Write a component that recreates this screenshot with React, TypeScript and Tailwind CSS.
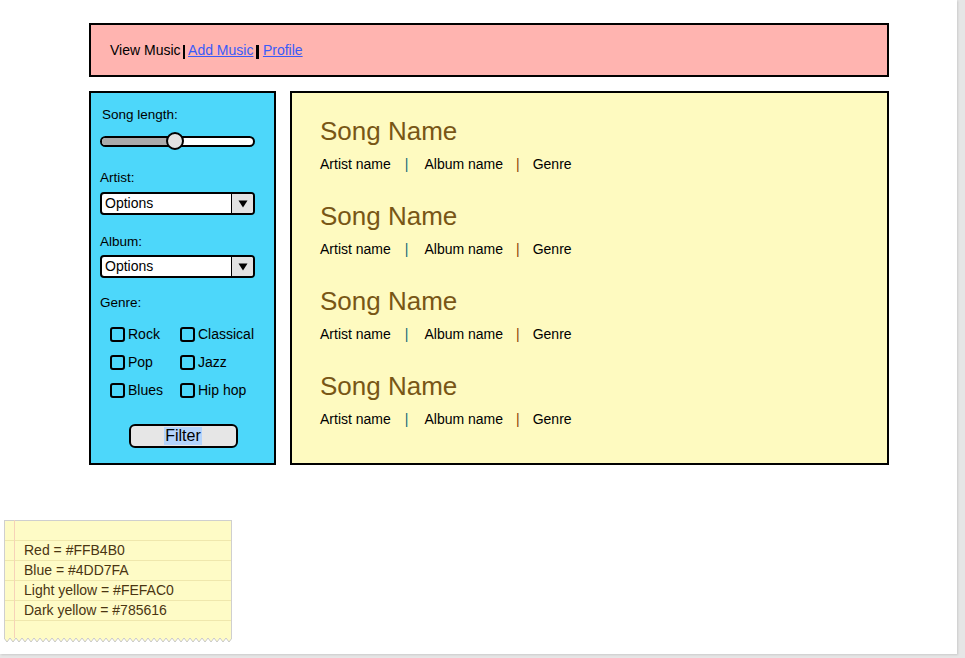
import React from "react";

const songs = [1, 2, 3, 4];

const Select = () => (
  <div className="flex h-[23px] w-[155px] overflow-hidden rounded-[4px] border-2 border-black bg-white">
    <span className="flex-1 pl-[3px] text-[14px] leading-[19px]">Options</span>
    <span className="flex w-[22px] items-center justify-center border-l-[1.5px] border-black bg-[#e2e2e2]">
      <svg width="10" height="8" viewBox="0 0 10 8">
        <polygon points="0.5,0.5 9.5,0.5 5,7.5" fill="#000" />
      </svg>
    </span>
  </div>
);

const Check = ({ label }: { label: string }) => (
  <div className="flex h-[28px] items-center">
    <span className="mr-[3px] h-[15px] w-[15px] rounded-[3px] border-2 border-black bg-transparent" />
    <span className="text-[14px]">{label}</span>
  </div>
);

const Zigzag = () => {
  const pts: string[] = [];
  for (let x = 0; x <= 228; x += 6) {
    pts.push(`${x},0`);
    pts.push(`${x + 3},4`);
  }
  return (
    <svg width="228" height="5" viewBox="0 0 228 5" className="block">
      <polygon points={`0,0 ${pts.join(" ")} 228,0`} fill="#fefbc6" />
      <polyline points={pts.join(" ")} fill="none" stroke="#c8c8c8" strokeWidth="1" />
    </svg>
  );
};

const App = () => {
  return (
    <div
      className="h-[658px] w-[965px] overflow-hidden bg-[#e6e6e6] text-black"
      style={{ fontFamily: '"Liberation Sans", Arial, sans-serif' }}
    >
      <div className="h-[654px] w-[957px] bg-white shadow-[1px_1px_2px_rgba(0,0,0,0.12)] pt-[23px]">
        <div className="pl-[89px]">
          {/* nav */}
          <header className="flex h-[54px] w-[800px] items-center border-2 border-black bg-[#FFB4B0] pl-[19px] text-[14px]">
            <span>View Music</span>
            <span className="ml-[2px] mr-[3px] mt-[3px] h-[14px] w-[2.5px] bg-black" />
            <a href="#" className="text-[#3a5bf8] underline">Add Music</a>
            <span className="ml-[3px] mr-[4px] mt-[3px] h-[14px] w-[2.5px] bg-black" />
            <a href="#" className="text-[#3a5bf8] underline">Profile</a>
          </header>

          <div className="mt-[14px] flex gap-[14px]">
            {/* filters */}
            <aside className="flex h-[374px] w-[187px] flex-col border-2 border-black bg-[#4DD7FA] pl-[9px] pt-[14px]">
              <span className="ml-[2px] text-[13.5px] leading-[16px]">Song length:</span>
              <div className="mt-[9px] flex h-[18px] w-[155px] items-center">
                <div className="flex h-[11px] w-[155px] items-center rounded-full border-2 border-black bg-white">
                  <div className="h-full w-[66px] rounded-l-full bg-[#aaaaaa]" />
                  <div className="-ml-[2px] h-[18px] w-[18px] shrink-0 rounded-full border-2 border-black bg-[#e2e2e2]" />
                </div>
              </div>

              <span className="mt-[20px] text-[13.5px] leading-[16px]">Artist:</span>
              <div className="mt-[6px]">
                <Select />
              </div>

              <span className="mt-[19px] text-[13.5px] leading-[16px]">Album:</span>
              <div className="mt-[5px]">
                <Select />
              </div>

              <span className="mt-[17px] text-[13.5px] leading-[16px]">Genre:</span>
              <div className="mt-[9px] grid w-[160px] grid-cols-[70px_1fr] pl-[10px]">
                <Check label="Rock" />
                <Check label="Classical" />
                <Check label="Pop" />
                <Check label="Jazz" />
                <Check label="Blues" />
                <Check label="Hip hop" />
              </div>

              <div className="mt-[20px] flex w-[166px] justify-center">
                <button className="flex h-[24px] w-[109px] items-center justify-center rounded-[6px] border-2 border-black bg-[#e6e6e6]">
                  <span className="bg-[#b4d4fc] px-px text-[16px] leading-[18px]">Filter</span>
                </button>
              </div>
            </aside>

            {/* song list */}
            <main className="flex h-[374px] w-[599px] flex-col gap-[28px] border-2 border-black bg-[#FEFAC0] pl-[28px] pt-[23px]">
              {songs.map((s) => (
                <div key={s} className="flex flex-col">
                  <h2 className="text-[26px] leading-[30px] text-[#785616]">Song Name</h2>
                  <div className="mt-[10px] flex text-[14px] leading-[17px]">
                    <span>Artist name</span>
                    <span className="ml-[14px] mr-[16px] text-[#0f6878]">|</span>
                    <span>Album name</span>
                    <span className="ml-[13px] mr-[13px] text-[#8a3a08]">|</span>
                    <span>Genre</span>
                  </div>
                </div>
              ))}
            </main>
          </div>
        </div>

        {/* colour note */}
        <div className="relative ml-[4px] mt-[55px] w-[228px]">
          <div className="border-x border-t border-[#cfcfcf] bg-[#fefbc6] text-[14px] text-[#4a3512]">
            <div className="h-[20px] border-b border-[#efe7ad]" />
            <div className="h-[20px] border-b border-[#efe7ad] pl-[19px] leading-[19px]">Red = #FFB4B0</div>
            <div className="h-[20px] border-b border-[#efe7ad] pl-[19px] leading-[19px]">Blue = #4DD7FA</div>
            <div className="h-[20px] border-b border-[#efe7ad] pl-[19px] leading-[19px]">Light yellow = #FEFAC0</div>
            <div className="h-[20px] border-b border-[#efe7ad] pl-[19px] leading-[19px]">Dark yellow = #785616</div>
            <div className="h-[17px]" />
          </div>
          <Zigzag />
          <span className="absolute left-[10px] top-0 h-[118px] w-px bg-[#f6d2b8]" />
        </div>
      </div>
    </div>
  );
};

export default App;
